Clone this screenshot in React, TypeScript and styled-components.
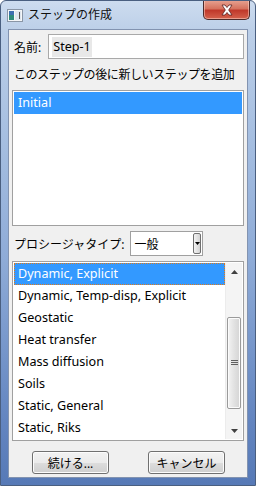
import React from "react";
import styled, { createGlobalStyle } from "styled-components";

const Global = createGlobalStyle`
  html, body { margin: 0; padding: 0; background: #ffffff; }
  * { box-sizing: border-box; }
`;

const FONT = `"Noto Sans", "Noto Sans CJK JP", sans-serif`;

const Window = styled.div`
  width: 256px;
  height: 486px;
  display: flex;
  flex-direction: column;
  border-radius: 6px 6px 0 0;
  border: 1px solid #4a5f80;
  background: linear-gradient(
    to bottom,
    #cddcef 0px,
    #bccfe8 30px,
    #a9c1e2 120px,
    #8eabd7 260px,
    #6385c0 420px,
    #5679b6 486px
  );
  font-family: ${FONT};
  overflow: hidden;
`;

const TitleBar = styled.div`
  height: 28px;
  display: flex;
  align-items: flex-start;
  padding: 0 5px 0 6px;
`;

const TitleIcon = styled.svg`
  margin-top: 8px;
  flex: none;
`;

const Title = styled.div`
  margin-top: 5px;
  margin-left: 5px;
  font-size: 12px;
  line-height: 18px;
  color: #101010;
  flex: 1;
`;

const CloseButton = styled.div`
  width: 47px;
  height: 20px;
  margin-top: -1px;
  border: 1px solid #4c2b2b;
  border-top: none;
  border-radius: 0 0 5px 5px;
  background: linear-gradient(to bottom, #e8a493 0%, #d6735f 45%, #c0392b 55%, #d5624d 100%);
  box-shadow: inset 0 0 0 1px rgba(255, 220, 210, 0.5);
  display: flex;
  align-items: center;
  justify-content: center;
`;

const Client = styled.div`
  flex: 1;
  margin: 0 7px 7px 7px;
  background: #f0f0f0;
  border: 1px solid #8293b0;
  display: flex;
  flex-direction: column;
  padding: 4px 3px 0 3px;
`;

const Row = styled.div`
  display: flex;
  align-items: center;
`;

const Label = styled.span`
  font-size: 12px;
  color: #000;
  padding-left: 2px;
  white-space: nowrap;
`;

const NameInput = styled.div`
  margin-left: 7px;
  width: 196px;
  height: 25px;
  border: 1px solid #a9a9a9;
  background: #fff;
  display: flex;
  align-items: center;
  padding-left: 3px;
`;

const SelectedText = styled.span`
  background: #e8e8e8;
  font-size: 12.6px;
  line-height: 20px;
  padding: 0 1px 0 1px;
  color: #000;
`;

const Caption = styled.div`
  font-size: 12px;
  color: #000;
  padding-left: 2px;
  margin-top: 5px;
  height: 21px;
  line-height: 21px;
  letter-spacing: -0.4px;
  white-space: nowrap;
`;

const ListBox = styled.div<{ $h: number }>`
  margin-top: 5px;
  height: ${(p) => p.$h}px;
  border: 1px solid #a0a0a0;
  background: #fff;
  padding: 1px;
  display: flex;
`;

const Items = styled.div`
  flex: 1;
  display: flex;
  flex-direction: column;
  overflow: hidden;
`;

const Item = styled.div<{ $sel?: boolean; $focus?: boolean }>`
  height: 22px;
  flex: none;
  line-height: 19px;
  font-size: 12.6px;
  padding-left: 3px;
  white-space: nowrap;
  color: ${(p) => (p.$sel ? "#fff" : "#000")};
  background: ${(p) => (p.$sel ? "#3399ff" : "transparent")};
  border: 1px ${(p) => (p.$focus ? "dotted #e07a1a" : "solid transparent")};
`;

const ComboRow = styled(Row)`
  margin-top: 5px;
`;

const Combo = styled.div`
  margin-left: 6px;
  width: 73px;
  height: 25px;
  border: 1px solid #a0a0a0;
  background: #fff;
  display: flex;
  align-items: center;
  padding: 0 1px 0 3px;
  font-size: 12px;
  color: #000;
`;

const ComboText = styled.span`
  flex: 1;
`;

const ComboButton = styled.div`
  width: 8px;
  height: 21px;
  border: 1px solid #707070;
  border-radius: 2px;
  background: linear-gradient(to right, #f2f2f2, #d4d4d4);
  display: flex;
  align-items: center;
  justify-content: center;
`;

const ScrollBar = styled.div`
  width: 17px;
  flex: none;
  background: #f4f4f4;
  border-left: 1px solid #ececec;
  display: flex;
  flex-direction: column;
  align-items: center;
`;

const Arrow = styled.div`
  height: 17px;
  width: 100%;
  display: flex;
  align-items: center;
  justify-content: center;
  flex: none;
`;

const Track = styled.div`
  flex: 1;
  width: 100%;
  display: flex;
  flex-direction: column;
  padding: 37px 1px 0 1px;
`;

const Thumb = styled.div`
  height: 92px;
  border: 1px solid #9a9a9a;
  border-radius: 2px;
  background: linear-gradient(to right, #f3f3f3, #e2e2e2 50%, #d4d4d4);
  box-shadow: inset 0 0 0 1px #fbfbfb;
  display: flex;
  align-items: center;
  justify-content: center;
`;

const Buttons = styled.div`
  display: flex;
  justify-content: space-between;
  padding: 0 19px 0 20px;
  margin-top: 10px;
`;

const Button = styled.div`
  width: 77px;
  height: 23px;
  border: 1px solid #707070;
  border-radius: 3px;
  background: linear-gradient(to bottom, #f2f2f2 0%, #ebebeb 50%, #dddddd 51%, #cfcfcf 100%);
  box-shadow: inset 0 0 0 1px #fcfcfc;
  display: flex;
  align-items: center;
  justify-content: center;
  font-size: 12px;
  color: #000;
`;

const procedures = [
  "Dynamic, Explicit",
  "Dynamic, Temp-disp, Explicit",
  "Geostatic",
  "Heat transfer",
  "Mass diffusion",
  "Soils",
  "Static, General",
  "Static, Riks",
];

export default function App() {
  return (
    <>
      <Global />
      <Window>
        <TitleBar>
          <TitleIcon width="16" height="13" viewBox="0 0 16 13">
            <rect x="0.5" y="0.5" width="15" height="12" fill="#f4f6f8" stroke="#8a96a6" />
            <rect x="2" y="2" width="5" height="9" fill="#2e8a7a" />
            <rect x="2" y="2" width="5" height="4" fill="#3d6fb0" />
            <rect x="8" y="2" width="6" height="9" fill="#dfe6ee" />
            <rect x="12" y="3" width="1" height="7" fill="#555" />
          </TitleIcon>
          <Title>ステップの作成</Title>
          <CloseButton>
            <svg width="14" height="12" viewBox="0 0 14 12">
              <path
                d="M2 1 L5 1 L7 3.5 L9 1 L12 1 L8.7 6 L12 11 L9 11 L7 8.5 L5 11 L2 11 L5.3 6 Z"
                fill="#ffffff"
                stroke="#5a2020"
                strokeWidth="0.8"
              />
            </svg>
          </CloseButton>
        </TitleBar>
        <Client>
          <Row>
            <Label>名前:</Label>
            <NameInput>
              <SelectedText>Step-1</SelectedText>
            </NameInput>
          </Row>
          <Caption>このステップの後に新しいステップを追加</Caption>
          <ListBox $h={136}>
            <Items>
              <Item $sel>Initial</Item>
            </Items>
          </ListBox>
          <ComboRow>
            <Label>プロシージャタイプ:</Label>
            <Combo>
              <ComboText>一般</ComboText>
              <ComboButton>
                <svg width="5" height="5" viewBox="0 0 5 5">
                  <path d="M0 1 L5 1 L2.5 4 Z" fill="#000" />
                </svg>
              </ComboButton>
            </Combo>
          </ComboRow>
          <ListBox $h={180}>
            <Items>
              {procedures.map((p, i) => (
                <Item key={p} $sel={i === 0} $focus={i === 0}>
                  {p}
                </Item>
              ))}
            </Items>
            <ScrollBar>
              <Arrow>
                <svg width="7" height="4" viewBox="0 0 7 4">
                  <path d="M0 4 L3.5 0 L7 4 Z" fill="#404040" />
                </svg>
              </Arrow>
              <Track>
                <Thumb>
                  <svg width="7" height="6" viewBox="0 0 7 6">
                    <path d="M0 0.5 H7 M0 2.5 H7 M0 4.5 H7" stroke="#606060" strokeWidth="1" />
                  </svg>
                </Thumb>
              </Track>
              <Arrow>
                <svg width="7" height="4" viewBox="0 0 7 4">
                  <path d="M0 0 L7 0 L3.5 4 Z" fill="#404040" />
                </svg>
              </Arrow>
            </ScrollBar>
          </ListBox>
          <Buttons>
            <Button>続ける...</Button>
            <Button>キャンセル</Button>
          </Buttons>
        </Client>
      </Window>
    </>
  );
}
